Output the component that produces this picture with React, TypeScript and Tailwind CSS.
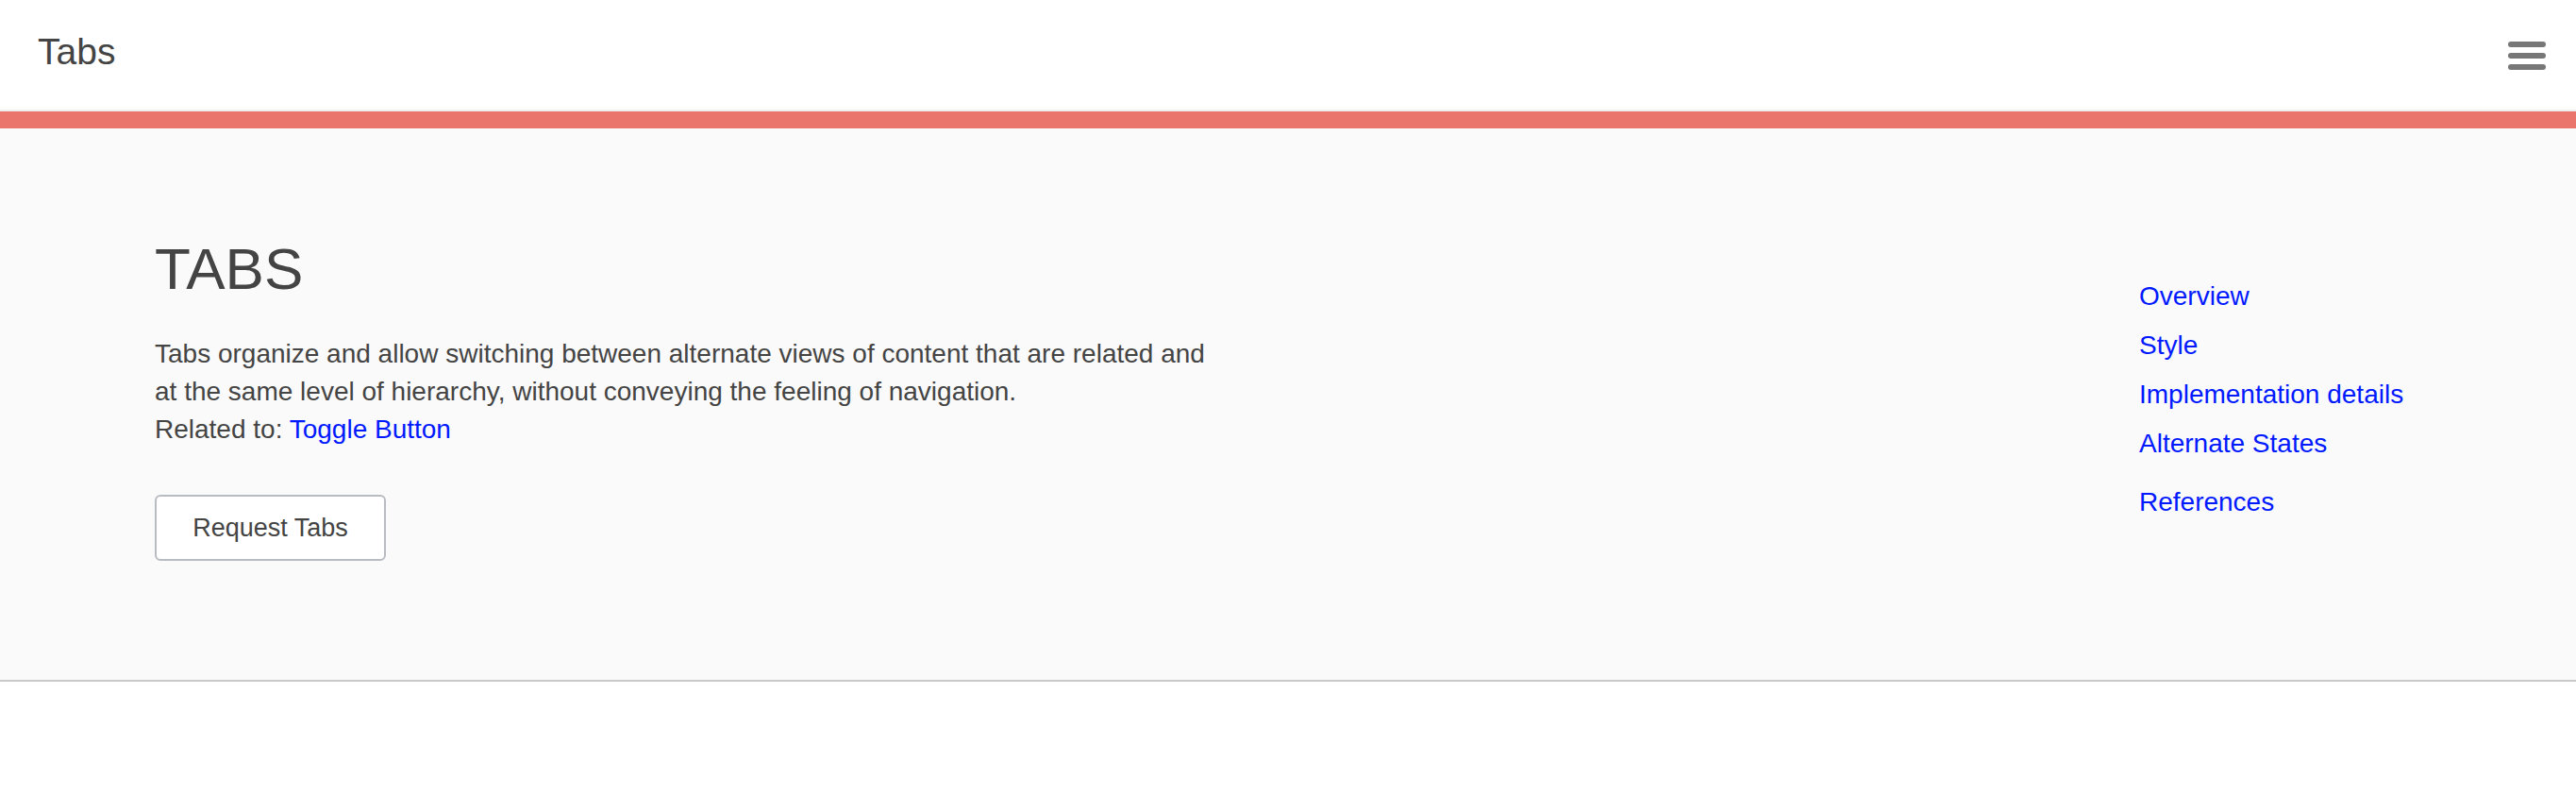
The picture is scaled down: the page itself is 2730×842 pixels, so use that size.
const links = ['Overview', 'Style', 'Implementation details', 'Alternate States']

const App = () => {
	return (
		<div className="min-h-screen bg-white font-['Liberation_Sans',Arial,sans-serif] text-[#444]">
			<header className="flex h-[118px] items-start justify-between border-b-2 border-[#efefef] pl-[40px] pr-[32px]">
				<h2 className="pt-[35px] text-[39px] leading-none text-[#444]">Tabs</h2>
				<button className="mt-[44px] flex w-[40px] flex-col gap-[6px]" aria-label="menu">
					<span className="h-[6px] w-full rounded-[3px] bg-[#777]"></span>
					<span className="h-[6px] w-full rounded-[3px] bg-[#777]"></span>
					<span className="h-[6px] w-full rounded-[3px] bg-[#777]"></span>
				</button>
			</header>
			<div className="h-[18px] bg-[#e9756c]"></div>
			<main className="flex h-[586px] justify-between border-b-2 border-[#c8c8c8] bg-[#fafafa] pl-[164px] pr-[163px]">
				<section className="pt-[118px]">
					<h1 className="text-[62px] leading-none text-[#444]">TABS</h1>
					<p className="mt-[39px] w-[1130px] text-[28px] leading-[40px]">
						Tabs organize and allow switching between alternate views of content
						that are related and at the same level of hierarchy, without
						conveying the feeling of navigation.
						<br />
						Related to: <a className="text-[#0019ff]">Toggle Button</a>
					</p>
					<button className="mt-[49px] h-[70px] w-[245px] rounded-[6px] border-2 border-[#b8bcc0] bg-white text-[27px] text-[#444]">
						Request Tabs
					</button>
				</section>
				<nav className="flex w-[300px] flex-col pt-[152px] text-[28px] leading-[52px] text-[#0019ff]">
					{links.map((l) => (
						<a key={l}>{l}</a>
					))}
					<a className="mt-[10px]">References</a>
				</nav>
			</main>
		</div>
	)
}

export default App
